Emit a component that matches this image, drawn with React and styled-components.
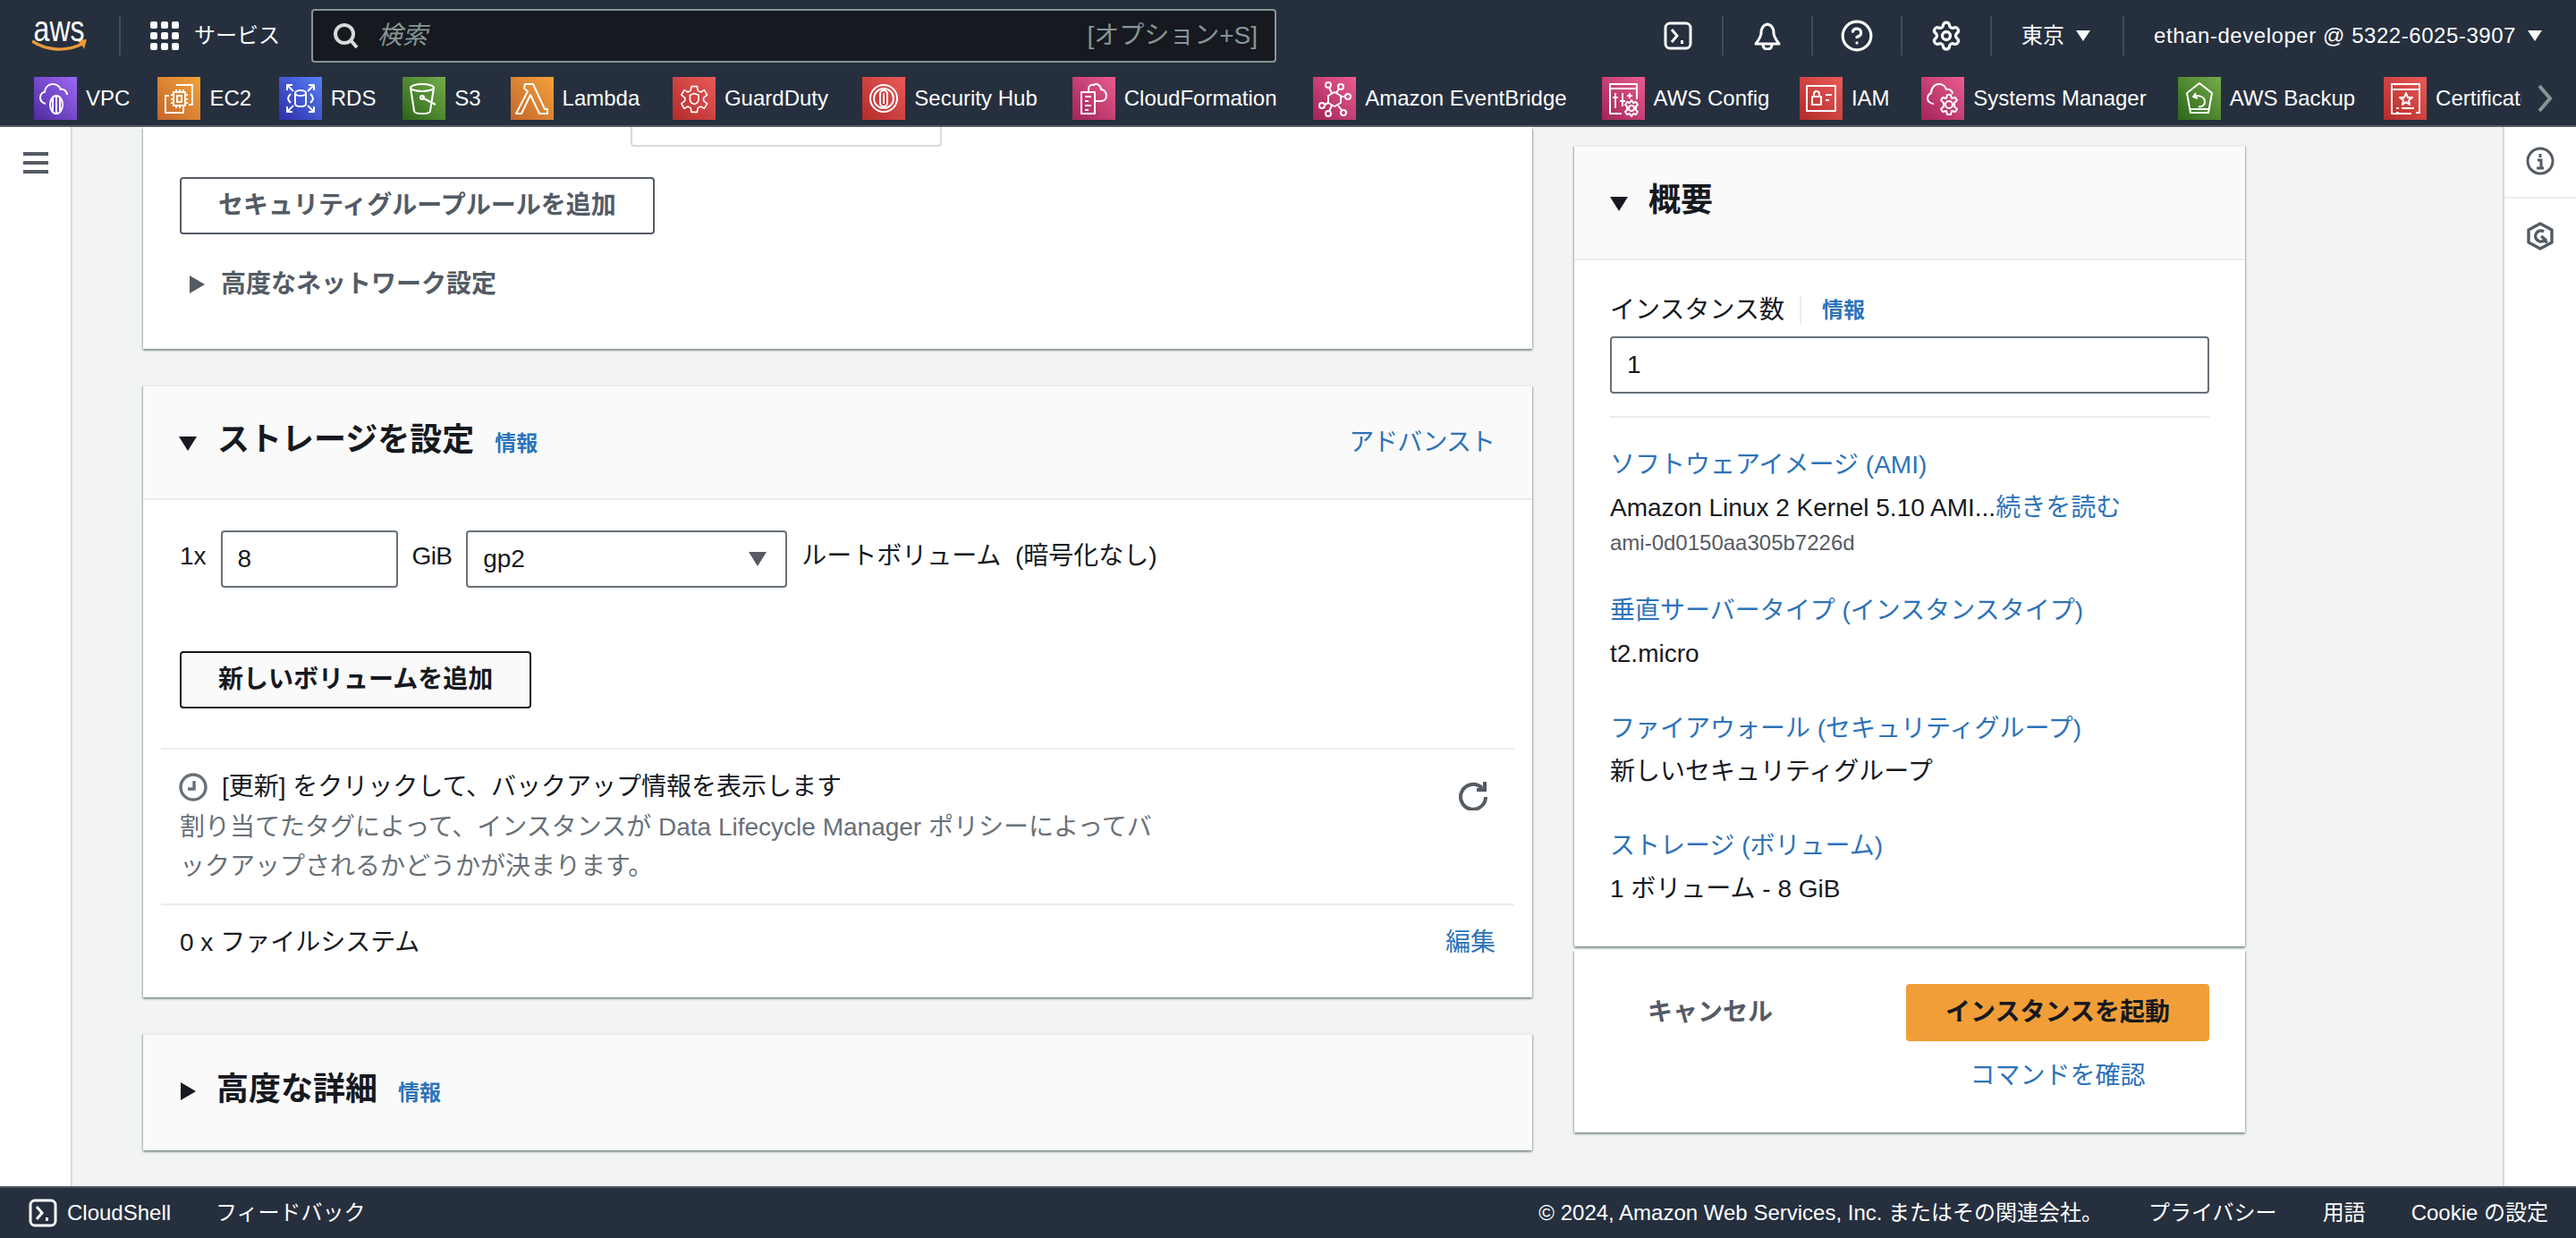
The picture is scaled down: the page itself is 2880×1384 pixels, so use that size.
import React from 'react';
import styled, { createGlobalStyle } from 'styled-components';
import { CircleHelp, Settings } from 'lucide-react';

const GlobalStyle = createGlobalStyle`
  html, body { margin: 0; padding: 0; height: 100%; overflow: hidden; }
  body {
    font-family: "Liberation Sans", "Noto Sans CJK JP", sans-serif;
    font-size: 28px;
    line-height: 40px;
    color: #16191f;
  }
  * { box-sizing: border-box; }
`;

const fills = {
  purple: 'linear-gradient(45deg, #4d2ba0, #a068f5)',
  orange: 'linear-gradient(45deg, #c4662c, #f2a23a)',
  blue: 'linear-gradient(45deg, #2f2eab, #5580f5)',
  green: 'linear-gradient(45deg, #2c6518, #74ad4a)',
  red: 'linear-gradient(45deg, #b32c2a, #ea5a58)',
  pink: 'linear-gradient(45deg, #a3245a, #ea5c8e)',
};

const Page = styled.div`
  height: 100vh;
  display: flex;
  flex-direction: column;
  overflow: hidden;
  background: #f2f3f3;
`;

const Header = styled.header`
  background: #252f3e;
  border-bottom: 2px solid #545b64;
  height: 142px;
  color: #fff;
  font-size: 24px;
  flex-shrink: 0;
`;

const TopBar = styled.div`
  height: 80px;
  display: flex;
  align-items: center;
  padding: 0 38px 0 36px;
`;

const Logo = styled.div`
  width: 64px;
  height: 40px;
  margin-right: 33px;
  flex-shrink: 0;
  display: flex;
  flex-direction: column;
`;

const LogoWord = styled.span`
  display: block;
  height: 24px;
  font-size: 40px;
  line-height: 24px;
  color: #fff;
  padding-left: 2px;
  transform: scaleX(0.8);
  transform-origin: left center;
`;

const Sep = styled.span`
  width: 2px;
  height: 44px;
  background: #414b59;
  flex-shrink: 0;
  margin: ${(p) => p.$margin || 0};
`;

const ServicesMenu = styled.div`
  display: flex;
  align-items: center;
  gap: 17px;
  margin-right: 35px;
  white-space: nowrap;
`;

const SearchBox = styled.div`
  width: 1079px;
  height: 60px;
  background: #16191f;
  border: 2px solid #879596;
  border-radius: 4px;
  display: flex;
  align-items: center;
  padding: 0 19px 0 22px;
  color: #879596;
  font-size: 28px;
`;

const SearchHint = styled.span`
  font-style: italic;
  margin-left: 20px;
`;

const Shortcut = styled.span`
  margin-left: auto;
`;

const TopRight = styled.div`
  margin-left: auto;
  display: flex;
  align-items: center;
  gap: 33px;
`;

const IconSlot = styled.span`
  width: 32px;
  display: flex;
  justify-content: center;
  svg { flex-shrink: 0; }
`;

const MenuText = styled.span`
  display: flex;
  align-items: center;
  gap: 13px;
  white-space: nowrap;
  letter-spacing: ${(p) => p.$spread || 0}px;
  margin-right: ${(p) => p.$after || 0}px;
`;

const ServiceRow = styled.nav`
  height: 60px;
  display: flex;
  align-items: center;
  padding-left: 38px;
`;

const ServiceList = styled.div`
  flex: 1;
  min-width: 0;
  display: flex;
  align-items: center;
  gap: 37.4px;
  overflow: hidden;
`;

const ServiceItem = styled.span`
  display: flex;
  align-items: center;
  gap: 10px;
  flex-shrink: 0;
`;

const ServiceLabel = styled.span`
  width: ${(p) => p.$w}px;
  white-space: nowrap;
`;

const ServiceIcon = styled.span`
  width: 48px;
  height: 48px;
  display: block;
  background: ${(p) => fills[p.$tone]};
  svg {
    display: block;
    fill: none;
    stroke: #fff;
    stroke-width: 2;
    stroke-linejoin: round;
  }
`;

const ScrollArrow = styled.span`
  width: 61px;
  flex-shrink: 0;
  padding-left: 17px;
  display: flex;
  align-items: center;
`;

const Body = styled.div`
  flex: 1;
  min-height: 0;
  display: flex;
`;

const SideNav = styled.aside`
  width: 81px;
  background: #fff;
  border-right: 2px solid #d5dbdb;
  padding: 28px 0 0 26px;
  flex-shrink: 0;
`;

const Burger = styled.span`
  display: flex;
  flex-direction: column;
  gap: 6px;
  width: 28px;
  i {
    display: block;
    height: 4px;
    background: #545b64;
  }
`;

const Main = styled.main`
  flex: 1;
  min-width: 0;
  display: flex;
  gap: 47px;
  padding-left: 79px;
  overflow: hidden;
`;

const LeftColumn = styled.div`
  width: 1553px;
  display: flex;
  flex-direction: column;
  gap: 40px;
  flex-shrink: 0;
`;

const RightColumn = styled.div`
  width: 750px;
  padding-top: 20px;
  display: flex;
  flex-direction: column;
  gap: 4px;
  flex-shrink: 0;
`;

const Card = styled.section`
  background: #fff;
  box-shadow: 0 2px 2px 0 rgba(0, 28, 36, 0.4), 2px 1px 2px -1px rgba(0, 28, 36, 0.2),
    -2px 1px 2px -1px rgba(0, 28, 36, 0.2);
  border-top: ${(p) => (p.$flush ? '0' : '2px solid #eaeded')};
`;

const CardHeader = styled.div`
  height: ${(p) => p.$height}px;
  background: #fafafa;
  display: flex;
  align-items: baseline;
  padding: ${(p) => p.$top}px 42px 0 ${(p) => p.$left || 40}px;
  border-bottom: ${(p) => (p.$plain ? '0' : '2px solid #eaeded')};
`;

const Caret = styled.span`
  width: 0;
  height: 0;
  flex-shrink: 0;
  ${(p) =>
    p.$open
      ? `border-left: ${p.$w / 2}px solid transparent;
         border-right: ${p.$w / 2}px solid transparent;
         border-top: ${p.$h}px solid ${p.$color || '#16191f'};`
      : `border-top: ${p.$h / 2}px solid transparent;
         border-bottom: ${p.$h / 2}px solid transparent;
         border-left: ${p.$w}px solid ${p.$color || '#16191f'};`}
`;

const CardTitle = styled.h2`
  margin: 0 0 0 23px;
  font-size: 36px;
  line-height: 48px;
  font-weight: 700;
`;

const InfoLink = styled.a`
  color: #2d73b9;
  font-size: 24px;
  font-weight: 700;
  margin-left: ${(p) => p.$gap || 23}px;
`;

const PlainLink = styled.a`
  color: #2d73b9;
  white-space: nowrap;
`;

const PushRight = styled(PlainLink)`
  margin-left: auto;
  letter-spacing: -1px;
`;

const ClippedField = styled.div`
  width: 348px;
  height: 22px;
  margin-left: 504px;
  border: 2px solid #d5dbdb;
  border-top: 0;
  border-radius: 0 0 4px 4px;
`;

const OutlineButton = styled.button`
  display: block;
  height: 64px;
  padding: 0 41px;
  font: inherit;
  font-weight: 700;
  border-radius: 4px;
  color: ${(p) => (p.$dark ? '#16191f' : '#545b64')};
  background: ${(p) => (p.$dark ? '#fafafa' : '#fff')};
  border: 2px solid ${(p) => (p.$dark ? '#16191f' : '#545b64')};
`;

const NetworkPart = styled.div`
  height: 248px;
  padding-left: 41px;
`;

const AddRule = styled(OutlineButton)`
  margin-top: 34px;
`;

const Expander = styled.div`
  margin-top: 36px;
  padding-left: 11px;
  display: flex;
  align-items: center;
  gap: 18px;
  color: #545b64;
  font-weight: 700;
`;

const VolumeRow = styled.div`
  display: flex;
  align-items: center;
  gap: 16px;
  padding: 34px 0 0 41px;
`;

const RowText = styled.span`
  padding-bottom: 6px;
  white-space: pre;
  letter-spacing: ${(p) => (p.$tight ? '-0.7px' : 'normal')};
`;

const TextField = styled.input`
  display: block;
  width: ${(p) => p.$w || '198px'};
  height: 64px;
  padding: 0 0 0 17px;
  font: inherit;
  color: #16191f;
  background: #fff;
  border: 2px solid #687078;
  border-radius: 4px;
  outline: none;
`;

const SelectBox = styled.div`
  width: 359px;
  height: 64px;
  border: 2px solid #687078;
  border-radius: 4px;
  display: flex;
  align-items: center;
  justify-content: space-between;
  padding: 0 21px 0 17px;
`;

const AddVolume = styled(OutlineButton)`
  margin: 71px 0 44px 41px;
`;

const Strip = styled.div`
  margin: 0 20px;
  padding: ${(p) => p.$pad};
  border-top: 2px solid #eaeded;
  display: flex;
  justify-content: space-between;
`;

const BackupTitle = styled.div`
  display: flex;
  align-items: center;
  gap: 16px;
  margin-left: -1px;
`;

const BackupNote = styled.p`
  margin: 3px 0 0;
  line-height: 44px;
  color: #687078;
`;

const RefreshWrap = styled.span`
  padding: 12px 8px 0 0;
`;

const SummaryBody = styled.div`
  padding: 36px 40px 44px;
`;

const FieldLabel = styled.div`
  display: flex;
  align-items: center;
  margin-bottom: 9px;
`;

const LabelSep = styled.span`
  width: 2px;
  height: 32px;
  background: #eaeded;
  margin-left: 17px;
`;

const SummaryRule = styled.hr`
  border: 0;
  border-top: 2px solid #eaeded;
  margin: 25px 0 33px;
`;

const SummaryItem = styled.div`
  margin-top: ${(p) => p.$gap || 0}px;
`;

const SummaryValue = styled.div`
  margin-top: 8px;
`;

const AmiId = styled.div`
  margin-top: 3px;
  font-size: 24px;
  line-height: 32px;
  color: #545b64;
`;

const ActionBar = styled.div`
  display: flex;
  justify-content: space-between;
  padding: 38px 40px 43px;
`;

const CancelButton = styled.span`
  height: 64px;
  padding: 0 42px;
  display: flex;
  align-items: center;
  font-weight: 700;
  color: #545b64;
`;

const LaunchColumn = styled.div`
  width: 339px;
  display: flex;
  flex-direction: column;
  align-items: center;
  gap: 19px;
`;

const LaunchButton = styled.button`
  width: 100%;
  height: 64px;
  border: 0;
  border-radius: 4px;
  background: #f19e38;
  font: inherit;
  font-weight: 700;
  color: #16191f;
`;

const SideRail = styled.aside`
  width: 82px;
  background: #fff;
  border-left: 2px solid #d5dbdb;
  flex-shrink: 0;
  margin-left: auto;
`;

const RailButton = styled.div`
  height: ${(p) => p.$h}px;
  display: flex;
  justify-content: center;
  padding-top: ${(p) => p.$top}px;
  border-bottom: ${(p) => (p.$line ? '2px solid #eaeded' : '0')};
`;

const Footer = styled.footer`
  height: 58px;
  flex-shrink: 0;
  background: #252f3e;
  border-top: 2px solid #545b64;
  color: #fff;
  font-size: 24px;
  display: flex;
  align-items: center;
  padding: 0 31px 0 32px;
`;

const ShellLink = styled.span`
  display: flex;
  align-items: center;
  gap: 11px;
  margin-right: 50px;
`;

const FooterLinks = styled.div`
  margin-left: auto;
  display: flex;
  gap: 51px;
`;

const services = [
  { name: 'VPC', w: 43, tone: 'purple', draw: (
    <>
      <path d="M13 30c-4-1-6-4-6-7 0-3 2-6 5-6 0-5 4-9 9-9 4 0 7 2 9 6 3-1 7 2 7 6" />
      <ellipse cx="25" cy="31" rx="7" ry="10" />
      <path d="M25 21v20M21 24v14M29 24v14" />
    </>
  ) },
  { name: 'EC2', w: 40, tone: 'orange', draw: (
    <>
      <path d="M21 9h18v22h-4M13 21H9v19h20v-5" />
      <rect x="18" y="17" width="13" height="15" />
      <rect x="22" y="21" width="5" height="7" />
      <path d="M15 20h3M15 25h3M15 29h3M31 20h3M31 25h3M31 29h3M21 14v3M25 14v3M29 14v3M21 32v3M25 32v3M29 32v3" />
    </>
  ) },
  { name: 'RDS', w: 43, tone: 'blue', draw: (
    <>
      <path d="M9 15V9h6M9 9l7 7M39 15V9h-6M39 9l-7 7M9 33v6h6M9 39l7-7M39 33v6h-6M39 39l-7-7" />
      <ellipse cx="24" cy="18" rx="6" ry="3" />
      <path d="M18 18v12c0 2 3 3 6 3s6-1 6-3V18" />
      <path d="M13 19c-2 2-3 3-3 5s1 3 3 5M35 19c2 2 3 3 3 5s-1 3-3 5" />
    </>
  ) },
  { name: 'S3', w: 25, tone: 'green', draw: (
    <>
      <ellipse cx="22" cy="12" rx="13" ry="4" />
      <path d="M9 12l4 26c0 2 4 3 9 3s9-1 9-3l4-26" />
      <path d="M22 23l15 8" />
      <circle cx="22" cy="23" r="2" />
    </>
  ) },
  { name: 'Lambda', w: 86, tone: 'orange', draw: (
    <path d="M16 8h9l13 28h3v5h-9L22 20l-10 21H6l13-25-4-3z" />
  ) },
  { name: 'GuardDuty', w: 117, tone: 'red', draw: (
    <g transform="translate(5 5) scale(.8)">
      <path d="M20 7h8l1 6 4 2 5-3 4 7-5 4v4l5 4-4 7-5-3-4 2-1 6h-8l-1-6-4-2-5 3-4-7 5-4v-4l-5-4 4-7 5 3 4-2z" />
      <path d="M24 17l6 2v6c0 4-3 6-6 7-3-1-6-3-6-7v-6z" />
    </g>
  ) },
  { name: 'Security Hub', w: 139, tone: 'red', draw: (
    <>
      <circle cx="24" cy="24" r="15" />
      <circle cx="24" cy="24" r="11" />
      <rect x="20" y="15" width="8" height="18" rx="4" />
      <path d="M24 18v12" />
    </>
  ) },
  { name: 'CloudFormation', w: 174, tone: 'pink', draw: (
    <>
      <path d="M10 17h15v24H10z" />
      <path d="M14 22h7M14 27h4M14 32h7M14 37h4" />
      <path d="M18 16v-3c0-3 3-5 6-4 1-1 3-2 5 0 2 1 3 3 3 5 3 0 6 3 6 7s-3 6-6 6h-7" />
    </>
  ) },
  { name: 'Amazon EventBridge', w: 227, tone: 'pink', draw: (
    <>
      <path d="M24 17l7 4v8l-7 4-7-4v-8z" />
      <circle cx="17" cy="9" r="3" />
      <circle cx="31" cy="11" r="3" />
      <circle cx="39" cy="22" r="3" />
      <circle cx="10" cy="32" r="3" />
      <circle cx="17" cy="41" r="3" />
      <circle cx="34" cy="40" r="3" />
      <path d="M18 12l3 6M29 13l-3 5M36 22h-5M13 31l4-2M18 38l3-6M32 37l-4-5" />
    </>
  ) },
  { name: 'AWS Config', w: 126, tone: 'pink', draw: (
    <>
      <path d="M22 41H9V8h30v17" />
      <path d="M9 13h30M15 18v17M23 18v15M31 18v6M12 23h6M20 27h6M28 21h6" />
      <circle cx="33" cy="35" r="3" />
      <path d="M33 26l2 3 3-1 2 3-2 2v4l2 2-2 3-3-1-2 3-2-3-3 1-2-3 2-2v-4l-2-2 2-3 3 1z" />
    </>
  ) },
  { name: 'IAM', w: 41, tone: 'red', draw: (
    <>
      <rect x="8" y="10" width="32" height="28" />
      <rect x="14" y="22" width="10" height="9" />
      <path d="M16 22v-3c0-4 6-4 6 0v3M29 20h7M29 26h4" />
    </>
  ) },
  { name: 'Systems Manager', w: 191, tone: 'pink', draw: (
    <>
      <path d="M14 30c-4 0-7-3-7-6 0-3 2-5 4-6 0-6 4-10 9-10 4 0 7 3 8 6 3-1 7 1 7 5" />
      <circle cx="31" cy="31" r="4" />
      <path d="M29 20h4l1 4 4-1 2 3-3 3v4l3 3-2 3-4-1-1 4h-4l-1-4-4 1-2-3 3-3v-4l-3-3 2-3 4 1z" />
    </>
  ) },
  { name: 'AWS Backup', w: 135, tone: 'green', draw: (
    <>
      <path d="M24 7l14 11-4 22H14l-4-22z" />
      <path d="M20 18l-3 4 5 2M18 22c3-2 12-1 12 6 0 4-4 6-7 5" />
      <path d="M14 36h20" />
    </>
  ) },
  { name: 'Certificate Manager', w: 200, tone: 'red', draw: (
    <>
      <path d="M36 40h4V8H9v33h22" />
      <path d="M9 14h31" />
      <path d="M25 18l2 5h5l-4 3 1 5-4-3-4 3 1-5-4-3h5z" />
      <path d="M14 35h3M20 35h14M14 40h3" />
    </>
  ) },
];

const AwsSmile = () => (
  <svg width="64" height="16" viewBox="0 0 64 16">
    <path d="M0 2c16 11 38 12 56 3" fill="none" stroke="#ec9a3c" strokeWidth="3.4" />
    <path d="M49 1l12-1-3 11c-1-3-3-6-9-10z" fill="#ec9a3c" />
  </svg>
);

const GridIcon = () => (
  <svg width="32" height="32" viewBox="0 0 32 32" fill="#fff">
    {[0, 12, 24].map((y) =>
      [0, 12, 24].map((x) => <rect key={`${x}-${y}`} x={x} y={y} width="8" height="8" rx="2" />)
    )}
  </svg>
);

const SearchIcon = () => (
  <svg width="30" height="30" viewBox="0 0 30 30" fill="none" stroke="#d5dbdb" strokeWidth="4">
    <circle cx="13" cy="13" r="10" />
    <path d="M20 20l7 8" />
  </svg>
);

const ShellIcon = () => (
  <svg width="32" height="32" viewBox="0 0 32 32" fill="none" stroke="#fff" strokeWidth="3">
    <rect x="2" y="2" width="28" height="28" rx="5" />
    <path d="M9 9l6 7-6 7" />
    <path d="M19 23h3" strokeWidth="4" />
  </svg>
);

const BellIcon = () => (
  <svg width="32" height="32" viewBox="0 0 32 32" fill="none" stroke="#fff" strokeWidth="3" strokeLinejoin="round">
    <path d="M16 3c5 1 7 5 7 10 0 4 3 8 6 12H3c3-4 6-8 6-12 0-5 2-9 7-10z" />
    <path d="M11 25c0 4 2 6 5 6s5-2 5-6" />
  </svg>
);

const ClockIcon = () => (
  <svg width="32" height="32" viewBox="0 0 32 32" fill="none" stroke="#687078" strokeWidth="3.4">
    <circle cx="16" cy="16" r="14" />
    <path d="M17 9v9h-7" />
  </svg>
);

const RefreshIcon = () => (
  <svg width="34" height="34" viewBox="0 0 34 34" fill="none" stroke="#545b64" strokeWidth="4">
    <path d="M27 9A14 14 0 1 0 31 19" />
    <path d="M30 2v9H21" />
  </svg>
);

const InfoIcon = () => (
  <svg width="32" height="32" viewBox="0 0 32 32" fill="none" stroke="#545b64" strokeWidth="3">
    <circle cx="16" cy="16" r="14" />
    <path d="M16 8v4" />
    <path d="M13 15h4v9M12 24h8" />
  </svg>
);

const HexIcon = () => (
  <svg width="32" height="32" viewBox="0 0 32 32" fill="none" stroke="#545b64" strokeWidth="3.4" strokeLinejoin="round">
    <path d="M16 2l13 7v14l-13 7-13-7V9z" />
    <path d="M20 11a6 6 0 1 0 0 10l4 2M17 16l6 5" />
  </svg>
);

const ScrollChevron = () => (
  <svg width="18" height="30" viewBox="0 0 18 30" fill="none" stroke="#879596" strokeWidth="4">
    <path d="M3 1l12 14L3 29" />
  </svg>
);

const App = () => (
  <Page>
    <GlobalStyle />
    <Header>
      <TopBar>
        <Logo>
          <LogoWord>aws</LogoWord>
          <AwsSmile />
        </Logo>
        <Sep $margin="0 33px 0 0" />
        <ServicesMenu>
          <GridIcon />
          サービス
        </ServicesMenu>
        <SearchBox>
          <SearchIcon />
          <SearchHint>検索</SearchHint>
          <Shortcut>[オプション+S]</Shortcut>
        </SearchBox>
        <TopRight>
          <ShellIcon />
          <Sep />
          <BellIcon />
          <Sep />
          <IconSlot><CircleHelp size={38} color="#fff" strokeWidth={2} /></IconSlot>
          <Sep />
          <IconSlot><Settings size={36} color="#fff" strokeWidth={2.2} /></IconSlot>
          <Sep />
          <MenuText $after={3}>東京 <Caret $open $w={16} $h={12} $color="#fff" /></MenuText>
          <Sep />
          <MenuText $spread={0.55}>ethan-developer @ 5322-6025-3907 <Caret $open $w={16} $h={12} $color="#fff" /></MenuText>
        </TopRight>
      </TopBar>
      <ServiceRow>
        <ServiceList>
          {services.map((s) => (
            <ServiceItem key={s.name}>
              <ServiceIcon $tone={s.tone}>
                <svg width="48" height="48" viewBox="0 0 48 48">{s.draw}</svg>
              </ServiceIcon>
              <ServiceLabel $w={s.w}>{s.name}</ServiceLabel>
            </ServiceItem>
          ))}
        </ServiceList>
        <ScrollArrow><ScrollChevron /></ScrollArrow>
      </ServiceRow>
    </Header>

    <Body>
      <SideNav>
        <Burger><i /><i /><i /></Burger>
      </SideNav>
      <Main>
        <LeftColumn>
          <Card $flush>
            <NetworkPart>
              <ClippedField />
              <AddRule>セキュリティグループルールを追加</AddRule>
              <Expander>
                <Caret $w={17} $h={20} $color="#545b64" />
                高度なネットワーク設定
              </Expander>
            </NetworkPart>
          </Card>

          <Card>
            <CardHeader $height={127} $top={36}>
              <Caret $open $w={20} $h={16} />
              <CardTitle>ストレージを設定</CardTitle>
              <InfoLink>情報</InfoLink>
              <PushRight>アドバンスト</PushRight>
            </CardHeader>
            <VolumeRow>
              <RowText>1x</RowText>
              <TextField readOnly value="8" />
              <RowText $tight>GiB</RowText>
              <SelectBox>
                gp2
                <Caret $open $w={21} $h={16} $color="#545b64" />
              </SelectBox>
              <RowText>ルートボリューム  (暗号化なし)</RowText>
            </VolumeRow>
            <AddVolume $dark>新しいボリュームを追加</AddVolume>
            <Strip $pad="22px 21px 19px">
              <div>
                <BackupTitle><ClockIcon />[更新] をクリックして、バックアップ情報を表示します</BackupTitle>
                <BackupNote>
                  割り当てたタグによって、インスタンスが Data Lifecycle Manager ポリシーによってバ<br />
                  ックアップされるかどうかが決まります。
                </BackupNote>
              </div>
              <RefreshWrap><RefreshIcon /></RefreshWrap>
            </Strip>
            <Strip $pad="22px 21px 41px">
              <span>0 x ファイルシステム</span>
              <PlainLink>編集</PlainLink>
            </Strip>
          </Card>

          <Card>
            <CardHeader $plain $height={129} $top={37} $left={42}>
              <Caret $w={17} $h={20} />
              <CardTitle>高度な詳細</CardTitle>
              <InfoLink>情報</InfoLink>
            </CardHeader>
          </Card>
        </LeftColumn>

        <RightColumn>
          <Card>
            <CardHeader $height={127} $top={36}>
              <Caret $open $w={20} $h={16} />
              <CardTitle>概要</CardTitle>
            </CardHeader>
            <SummaryBody>
              <FieldLabel>
                インスタンス数
                <LabelSep />
                <InfoLink>情報</InfoLink>
              </FieldLabel>
              <TextField $w="100%" readOnly value="1" />
              <SummaryRule />
              <SummaryItem>
                <PlainLink>ソフトウェアイメージ (AMI)</PlainLink>
                <SummaryValue>Amazon Linux 2 Kernel 5.10 AMI...<PlainLink>続きを読む</PlainLink></SummaryValue>
                <AmiId>ami-0d0150aa305b7226d</AmiId>
              </SummaryItem>
              <SummaryItem $gap={40}>
                <PlainLink>垂直サーバータイプ (インスタンスタイプ)</PlainLink>
                <SummaryValue>t2.micro</SummaryValue>
              </SummaryItem>
              <SummaryItem $gap={44}>
                <PlainLink>ファイアウォール (セキュリティグループ)</PlainLink>
                <SummaryValue>新しいセキュリティグループ</SummaryValue>
              </SummaryItem>
              <SummaryItem $gap={43}>
                <PlainLink>ストレージ (ボリューム)</PlainLink>
                <SummaryValue>1 ボリューム - 8 GiB</SummaryValue>
              </SummaryItem>
            </SummaryBody>
          </Card>
          <Card $flush>
            <ActionBar>
              <CancelButton>キャンセル</CancelButton>
              <LaunchColumn>
                <LaunchButton>インスタンスを起動</LaunchButton>
                <PlainLink>コマンドを確認</PlainLink>
              </LaunchColumn>
            </ActionBar>
          </Card>
        </RightColumn>
        <SideRail>
          <RailButton $h={80} $top={22} $line><InfoIcon /></RailButton>
          <RailButton $h={80} $top={26}><HexIcon /></RailButton>
        </SideRail>
      </Main>
    </Body>

    <Footer>
      <ShellLink><ShellIcon />CloudShell</ShellLink>
      フィードバック
      <FooterLinks>
        <span>© 2024, Amazon Web Services, Inc. またはその関連会社。</span>
        <span>プライバシー</span>
        <span>用語</span>
        <span>Cookie の設定</span>
      </FooterLinks>
    </Footer>
  </Page>
);

export default App;
